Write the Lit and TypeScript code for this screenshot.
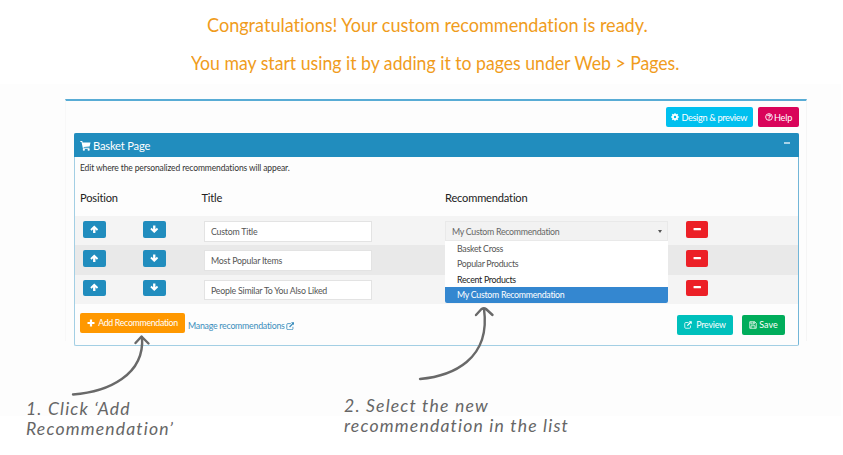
import { LitElement, html, css, svg, nothing } from "lit";
import { customElement, property } from "lit/decorators.js";

const glyphs: Record<string, unknown> = {
  cart: svg`<path d="M0.5 1.5H3.3L3.8 3.5H15.3L14 9.3L5.2 10.2L5.5 11.2H13.8V12.6H4.3L2.2 3H0.5Z"/><circle cx="5.6" cy="14.2" r="1.6"/><circle cx="12.6" cy="14.2" r="1.6"/>`,
  gear: svg`<circle cx="8" cy="8" r="4.1" fill="none" stroke="currentColor" stroke-width="3.4"/><path d="M8 0.4V4M8 12V15.6M0.4 8H4M12 8H15.6M2.6 2.6L5 5M11 11L13.4 13.4M13.4 2.6L11 5M5 11L2.6 13.4" fill="none" stroke="currentColor" stroke-width="2.8"/>`,
  help: svg`<circle cx="8" cy="8" r="6.7" fill="none" stroke="currentColor" stroke-width="1.8"/><path d="M5.4 6.2C5.6 3.2 10.8 3.4 10.6 6.2C10.4 7.8 8 7.8 8 9.6M8 10.8V12.8" fill="none" stroke="currentColor" stroke-width="2.2"/>`,
  up: svg`<path d="M8 0.8L15.4 8.2L13 10.6L10.2 8V15H5.8V8L3 10.6L0.6 8.2Z"/>`,
  down: svg`<path d="M8 15.2L15.4 7.8L13 5.4L10.2 8V1H5.8V8L3 5.4L0.6 7.8Z"/>`,
  minus: svg`<rect x="1" y="5.5" width="14" height="4.5" rx="1"/>`,
  plus: svg`<path d="M5.8 1H10.2V5.8H15V10.2H10.2V15H5.8V10.2H1V5.8H5.8Z"/>`,
  external: svg`<path d="M9 3H3.5Q1.5 3 1.5 5V12.5Q1.5 14.5 3.5 14.5H11Q13 14.5 13 12.5V9" fill="none" stroke="currentColor" stroke-width="1.6"/><path d="M9.5 0.5H15.5V6.5L13.4 4.4L7.6 10.2L5.8 8.4L11.6 2.6Z"/>`,
  save: svg`<path d="M1.5 1.5H11.5L14.5 4.5V14.5H1.5ZM4 14.5V9.5H12V14.5M4 1.5V6H10.5V1.5M8.5 2V5" fill="none" stroke="currentColor" stroke-width="1.5"/>`,
};

@customElement("ui-icon")
export class UiIcon extends LitElement {
  static styles = css`
    :host { display: inline-flex; flex: none; }
    .icon { display: block; width: 100%; height: 100%; fill: currentColor; }
  `;
  @property() name = "";
  render() {
    return html`<svg class="icon" viewBox="0 0 16 16">${glyphs[this.name]}</svg>`;
  }
}

const titles = ["Custom Title", "Most Popular Items", "People Similar To You Also Liked"];
const options = ["Basket Cross", "Popular Products", "Recent Products", "My Custom Recommendation"];

@customElement("app-root")
export class AppRoot extends LitElement {
  static styles = css`
    :host { display: block; position: relative; width: 843px; height: 455px; overflow: hidden; background: #fff; font-family: Lato, "Liberation Sans", sans-serif; font-variant-ligatures: none; }
    * { box-sizing: border-box; }
    .intro { height: 84px; padding-top: 12px; color: #f09c1c; font-size: 18.6px; line-height: 27px; white-space: nowrap; }
    .line { display: block; width: max-content; margin-left: 207px; transform: scaleX(0.972); transform-origin: 0 50%; }
    .line.second { margin: 11px 0 0 191px; transform: scaleX(0.949); }
    .stage { width: 841px; height: 332px; padding: 15px 0 0 65px; background: #fdfdfd; }
    .page { width: 742px; height: 242px; border-top: 2px solid #58acd5; border-left: 1px solid #f8f8f8; border-right: 1px solid #f5f5f5; padding: 6px 7px 0 8px; }
    .tools { display: flex; justify-content: flex-end; gap: 5px; height: 26px; }
    .btn { display: flex; align-items: center; justify-content: center; gap: 2px; height: 20px; border-radius: 2px; color: #fff; font-size: 9.2px; letter-spacing: -0.2px; white-space: nowrap; }
    .btn ui-icon { width: 8px; height: 8px; }
    .design { width: 87.5px; background: #00c0ef; letter-spacing: -0.34px; }
    .help { width: 41px; background: #d9045a; gap: 1px; }
    .panel { width: 725px; height: 213px; border: 1px solid #a3cfe4; border-right-color: #72b6d8; border-radius: 2px; }
    .bar { display: flex; align-items: center; height: 24px; margin: -1px -1px 0; padding: 0 9px 0 6px; border-radius: 2px 2px 0 0; background: #218dbe; color: #fff; font-size: 11.2px; letter-spacing: -0.2px; }
    .bar .cart { width: 11px; height: 11px; margin-right: 2px; }
    .collapse { width: 6px; height: 2px; margin: -5px 0 0 auto; background: #a9d3e8; }
    .hint { height: 31px; padding: 5px 0 0 5px; color: #333; font-size: 8.5px; line-height: 12px; letter-spacing: -0.12px; }
    .heads { display: grid; grid-template-columns: 121.5px 243.5px auto; height: 28px; padding: 3px 0 0 5px; color: #222; font-size: 11.1px; line-height: 14px; letter-spacing: -0.18px; }
    .row { display: grid; grid-template-columns: 60px 61px 241px 241px auto; align-items: start; height: 29.33px; padding: 5px 0 0 8px; background: #f4f4f4; }
    .row.alt { background: #e9e9e9; }
    .mini { display: flex; align-items: center; justify-content: center; width: 23px; height: 16.5px; padding-bottom: 1px; border-radius: 2px; background: #218dbe; color: #fff; }
    .mini ui-icon { width: 8.5px; height: 8.5px; }
    .mini.remove { width: 22px; background: #ec2027; }
    .field { width: 168px; height: 20.5px; margin-left: -0.5px; padding: 0 6.5px; border: 1px solid #e3e3e3; background: #fff; color: #555; font-size: 8.8px; line-height: 19px; letter-spacing: -0.22px; }
    .select { position: relative; display: flex; align-items: center; justify-content: space-between; width: 223px; height: 20px; padding: 0 5px 0 6px; border: 1px solid #e9e9e9; background: #f2f2f2; color: #666; font-size: 8.8px; letter-spacing: -0.28px; }
    .caret { border: 2.5px solid transparent; border-top: 3px solid #555; border-bottom: 0; }
    .menu { position: absolute; z-index: 1; top: 19px; left: -1px; width: 223px; height: 62px; background: #fff; color: #555; border-radius: 0 0 2px 2px; }
    .option { height: 15.4px; padding-left: 12px; line-height: 15px; }
    .option.dark { color: #222; }
    .option.active { height: 15.8px; background: #3487d0; color: #fff; border-radius: 0 0 2px 2px; }
    .foot { display: flex; align-items: flex-start; padding: 9px 13px 0 5px; }
    .add { width: 105px; background: #ff9800; gap: 3px; font-size: 8.8px; letter-spacing: -0.32px; }
    .manage { display: flex; align-items: center; gap: 1px; margin: 7px auto 0 3px; color: #3b8dbc; font-size: 8.8px; line-height: 12px; letter-spacing: -0.25px; }
    .manage ui-icon { width: 8.5px; height: 8.5px; }
    .preview { width: 56px; margin-top: 2px; background: #00c0bc; gap: 4px; font-size: 8.8px; }
    .save { width: 43px; margin: 2px 0 0 9px; background: #00ad5b; font-size: 9px; letter-spacing: 0; }
    .arrows { position: absolute; inset: 0; z-index: 2; width: 843px; height: 455px; fill: none; stroke: #696969; stroke-width: 2.4; stroke-linecap: round; stroke-linejoin: round; }
    .note { position: absolute; top: 399px; color: #666; font-size: 17.6px; font-style: italic; line-height: 20px; letter-spacing: 1.15px; white-space: nowrap; }
    .note span { display: block; width: max-content; }
    .n1 { left: 26px; }
    .n2 { left: 344px; top: 396px; letter-spacing: 1.18px; }
  `;

  render() {
    return html`
      <div class="intro">
        <span class="line">Congratulations! Your custom recommendation is ready.</span>
        <span class="line second">You may start using it by adding it to pages under Web &gt; Pages.</span>
      </div>
      <div class="stage">
        <div class="page">
          <div class="tools">
            <div class="btn design"><ui-icon name="gear"></ui-icon><span>Design &amp; preview</span></div>
            <div class="btn help"><ui-icon name="help"></ui-icon><span>Help</span></div>
          </div>
          <div class="panel">
            <div class="bar"><ui-icon class="cart" name="cart"></ui-icon><span>Basket Page</span><i class="collapse"></i></div>
            <div class="hint"><span>Edit where the personalized recommendations will appear.</span></div>
            <div class="heads"><span>Position</span><span>Title</span><span>Recommendation</span></div>
            ${titles.map((t, i) => html`
              <div class="row ${i === 1 ? "alt" : ""}">
                <div class="mini"><ui-icon name="up"></ui-icon></div>
                <div class="mini"><ui-icon name="down"></ui-icon></div>
                <div class="field">${t}</div>
                ${i === 0
                  ? html`<div class="select"><span>My Custom Recommendation</span><i class="caret"></i>
                      <div class="menu">${options.map((o, k) => html`<div class="option ${k === 3 ? "active" : k === 2 ? "dark" : ""}">${o}</div>`)}</div>
                    </div>`
                  : html`<span>${nothing}</span>`}
                <div class="mini remove"><ui-icon name="minus"></ui-icon></div>
              </div>`)}
            <div class="foot">
              <div class="btn add"><ui-icon name="plus"></ui-icon><span>Add Recommendation</span></div>
              <div class="manage"><span>Manage recommendations</span><ui-icon name="external"></ui-icon></div>
              <div class="btn preview"><ui-icon name="external"></ui-icon><span>Preview</span></div>
              <div class="btn save"><ui-icon name="save"></ui-icon><span>Save</span></div>
            </div>
          </div>
        </div>
      </div>
      <svg class="arrows" viewBox="0 0 843 455">
        <path d="M73 394.5C108 392 145 375 142 337M135.5 343L141.5 336.5L148.5 343.5"/>
        <path d="M420 379C452 376 491 360 484 309M476 315L481.5 309Q484 307.5 486 309L492.5 315"/>
      </svg>
      <div class="note n1"><span>1. Click ‘Add</span><span>Recommendation’</span></div>
      <div class="note n2"><span>2. Select the new</span><span>recommendation in the list</span></div>
    `;
  }
}
